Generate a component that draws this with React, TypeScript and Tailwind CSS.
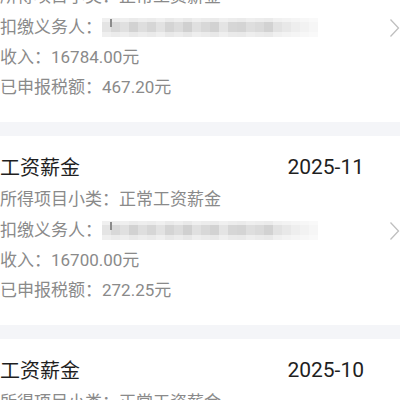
import React from "react";

const FONT = { fontFamily: "Roboto, 'Noto Sans CJK SC', sans-serif" };

const shadesTop = ["#f0f0f0","#ededed","#efefef","#ebebeb","#eeeeee","#ececec","#f0f0f0","#eaeaea","#eeeeee","#e9e9e9","#efefef","#ececec","#ebebeb","#f0f0f0","#ededed","#ebebeb","#efefef","#ededed","#ebebeb","#f1f1f1","#f3f3f3","#f5f5f5","#f7f7f7","#f9f9f9"];
const shadesA = ["#e4e4e4","#d8d8d8","#e0e0e0","#d2d2d2","#dedede","#d6d6d6","#e2e2e2","#d4d4d4","#dcdcdc","#d0d0d0","#e0e0e0","#d8d8d8","#d2d2d2","#e4e4e4","#d6d6d6","#d4d4d4","#dedede","#dadada","#d2d2d2","#e2e2e2","#e8e8e8","#eeeeee","#f2f2f2","#f6f6f6"];
const shadesB = ["#efefef","#ebebeb","#eeeeee","#e9e9e9","#ededed","#eaeaea","#efefef","#e8e8e8","#ececec","#e7e7e7","#eeeeee","#ebebeb","#e8e8e8","#efefef","#eaeaea","#e9e9e9","#eeeeee","#ebebeb","#e9e9e9","#f0f0f0","#f3f3f3","#f5f5f5","#f7f7f7","#f9f9f9"];

function Mosaic() {
  return (
    <div className="relative h-[19px] w-[216px] blur-[0.6px]">
      <div className="flex h-[4px]">
        {shadesTop.map((c, i) => (
          <div key={i} className="h-full w-[9px]" style={{ background: c }} />
        ))}
      </div>
      <div className="flex h-[10px]">
        {shadesA.map((c, i) => (
          <div key={i} className="h-full w-[9px]" style={{ background: c }} />
        ))}
      </div>
      <div className="flex h-[5px]">
        {shadesB.map((c, i) => (
          <div key={i} className="h-full w-[9px]" style={{ background: c }} />
        ))}
      </div>
      <div className="absolute left-[8px] top-[1px] h-[8px] w-[1.5px] bg-[#8a8a8a]" />
    </div>
  );
}

function Chevron() {
  return (
    <svg width="11" height="20" viewBox="0 0 11 20" className="shrink-0">
      <polyline points="1.5,1.5 9.5,10 1.5,18.5" fill="none" stroke="#bfbfbf" strokeWidth="1.3" />
    </svg>
  );
}

function Card({ month, sub, income, tax }: { month: string; sub: string; income: string; tax: string }) {
  return (
    <div className="bg-white h-[189px] pt-[16px]">
      <div className="flex items-center justify-between h-[32px] pr-[36px]">
        <span className="text-[20px] text-[#1f1f1f]">工资薪金</span>
        <span className="text-[21px] text-[#1f1f1f]">{month}</span>
      </div>
      <div className="mt-[1px] h-[30px] flex items-center text-[17px] text-[#8a8a8a]">所得项目小类：{sub}</div>
      <div className="h-[31px] flex items-center text-[17px] text-[#8a8a8a]">
        <span>扣缴义务人：</span>
        <div className="ml-[0px] flex-1">
          <Mosaic />
        </div>
        <Chevron />
      </div>
      <div className="h-[30px] flex items-center text-[17px] text-[#8a8a8a]">收入：{income}</div>
      <div className="h-[30px] flex items-center text-[17px] text-[#8a8a8a]">已申报税额：{tax}</div>
    </div>
  );
}

export default function App() {
  return (
    <div className="w-[400px] h-[400px] overflow-hidden bg-[#f4f5f8]" style={FONT}>
      <div className="-mt-[67px] flex flex-col gap-[14px]">
        <Card month="2025-12" sub="正常工资薪金" income="16784.00元" tax="467.20元" />
        <Card month="2025-11" sub="正常工资薪金" income="16700.00元" tax="272.25元" />
        <Card month="2025-10" sub="正常工资薪金" income="16700.00元" tax="272.25元" />
      </div>
    </div>
  );
}
